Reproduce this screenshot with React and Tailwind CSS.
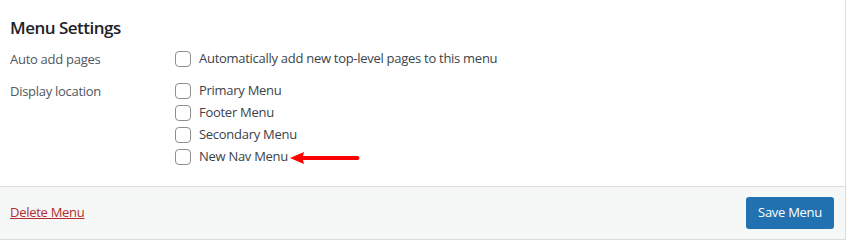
export default function App() {
    const locations = ["Primary Menu", "Footer Menu", "Secondary Menu", "New Nav Menu"];

    return (
        <div className="w-[847px] h-[240px] bg-white font-['Open_Sans',sans-serif] text-[13px] tracking-[-0.28px] text-[#3c434a]">
            <div className="w-[846px] h-[240px] border-r border-b border-[#dcdcde] flex flex-col">
                <div className="flex-1 px-[10px]">
                    <h3 className="pt-[17px] text-[17px] tracking-[-0.5px] font-semibold text-[#1d2327] leading-[22px]">Menu Settings</h3>

                    <div className="flex mt-[9px]">
                        <div className="w-[165px] leading-[22px] text-[#50575e]">Auto add pages</div>
                        <label className="flex items-center gap-[8px] h-[22px]">
                            <span className="w-[16px] h-[16px] rounded-[4px] border border-[#8c8f94] bg-white"></span>
                            <span>Automatically add new top-level pages to this menu</span>
                        </label>
                    </div>

                    <div className="flex mt-[10px]">
                        <div className="w-[165px] leading-[22px] text-[#50575e]">Display location</div>
                        <div className="flex flex-col">
                            {locations.map((name) => (
                                <label key={name} className="flex items-center gap-[8px] h-[22px]">
                                    <span className="w-[16px] h-[16px] rounded-[4px] border border-[#8c8f94] bg-white"></span>
                                    <span>{name}</span>
                                    {name === "New Nav Menu" && (
                                        <svg width="71" height="14" viewBox="0 0 71 14" className="-ml-[6px] mt-[1px]">
                                            <path d="M0 7 L14 1 L13 5 L68 5 Q71 7 68 9 L13 9 L14 13 Z" fill="#ff0000" />
                                        </svg>
                                    )}
                                </label>
                            ))}
                        </div>
                    </div>
                </div>

                <div className="h-[53px] bg-[#f6f7f7] border-t border-[#dcdcde] px-[10px] flex items-center justify-between">
                    <a href="#" className="text-[#b32d2e] underline">Delete Menu</a>
                    <button className="h-[32px] px-[12px] rounded-[3px] bg-[#2271b1] text-white text-[13px] mr-[1px]">Save Menu</button>
                </div>
            </div>
        </div>
    );
}
